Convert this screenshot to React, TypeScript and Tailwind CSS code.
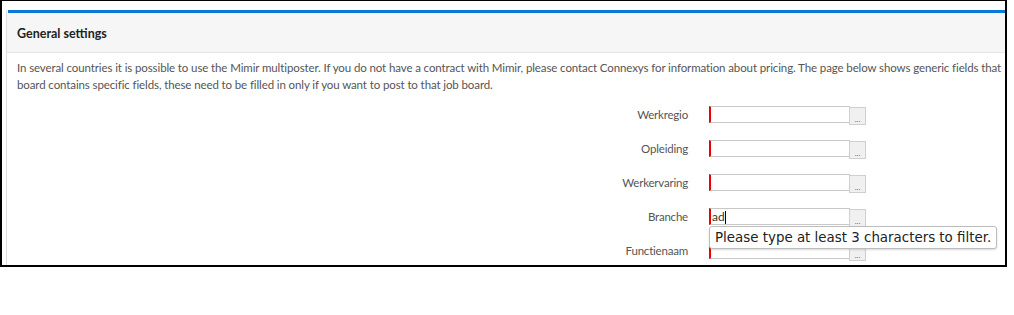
import React from 'react';

const fields = ['Werkregio', 'Opleiding', 'Werkervaring', 'Branche', 'Functienaam'];

const LookupField: React.FC<{ label: string; value?: string; tip?: string }> = ({ label, value, tip }) => (
  <div className="flex items-center h-[34px]">
    <label className="w-[688px] text-right text-[11.5px] tracking-[-0.2px] text-[#555]">{label}</label>
    <div className="relative ml-[21px] flex items-start">
      <div className="w-[141px] h-[17px] bg-white border border-[#c8c8c8] border-l-[2px] border-l-[#ee0000] text-[12px] leading-[15px] text-[#333] pl-[1px]">
        {value}
        {value && <span className="inline-block w-px h-[13px] bg-black align-middle" />}
      </div>
      <div className="w-[17px] h-[18px] mt-[1px] bg-[#f0f0f0] border border-[#cfcfcf] -ml-px flex items-end justify-center text-[8px] leading-[10px] text-[#666]">
        ...
      </div>
      {tip && (
        <div className="absolute left-0 top-[18px] z-10 whitespace-nowrap bg-white border border-[#bdbdbd] rounded-[3px] px-[5px] py-[3px] text-[13.4px] leading-[15px] text-[#222] font-['DejaVu_Sans',sans-serif] shadow-[0_1px_2px_rgba(0,0,0,0.15)]">
          {tip}
        </div>
      )}
    </div>
  </div>
);

export default function App() {
  return (
    <div className="w-[1014px] h-[315px] bg-white font-['Lato','Open_Sans',sans-serif]">
      <div className="w-[1007px] h-[267px] border-black border-t border-l-2 border-r-2 border-b-2 overflow-hidden pl-[4px] pt-[9px]">
        <div className="border-l border-[#dedede] h-full">
          <div className="border-t-[3px] border-[#0a78d7] ml-[1px]" />
          <div className="bg-[#f6f6f6] border-b border-[#e6e6e6] h-[40px] flex items-center pl-[10px] pt-[3px] text-[12.5px] font-bold text-[#222]">
            General settings
          </div>
          <div className="pl-[10px] pt-[6px] text-[11.5px] tracking-[-0.11px] leading-[17px] text-[#555]">
            <div className="whitespace-nowrap">
              In several countries it is possible to use the Mimir multiposter. If you do not have a contract with Mimir, please contact Connexys for information about pricing. The page below shows generic fields that
            </div>
            <div className="whitespace-nowrap">
              board contains specific fields, these need to be filled in only if you want to post to that job board.
            </div>
          </div>
          <div className="pt-[5px] -ml-[7px]">
            {fields.map((f) => (
              <LookupField
                key={f}
                label={f}
                value={f === 'Branche' ? 'ad' : undefined}
                tip={f === 'Branche' ? 'Please type at least 3 characters to filter.' : undefined}
              />
            ))}
          </div>
        </div>
      </div>
    </div>
  );
}
